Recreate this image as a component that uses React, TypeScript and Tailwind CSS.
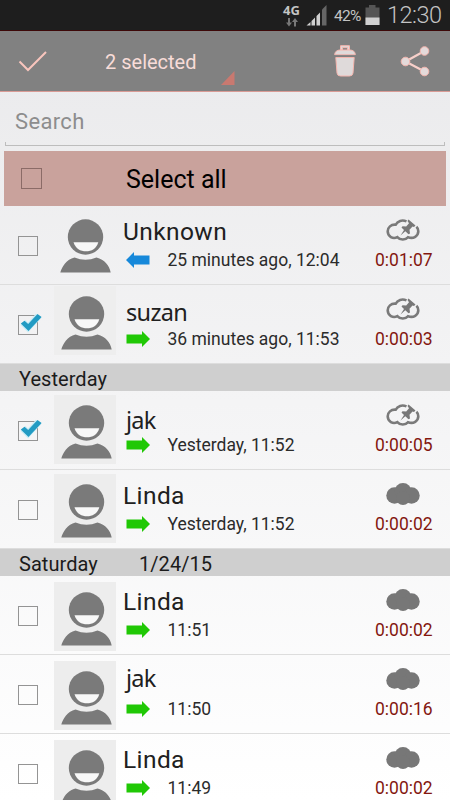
type Call = {
  name: string;
  time: string;
  duration: string;
  checked?: boolean;
  incoming?: boolean;
  pinned?: boolean;
  nameClass: string;
  avatarClass: string;
};

const robotoName = "font-['Roboto',sans-serif] pl-[7px] pt-3 text-[24.500px] tracking-[0.4px]";
const notoName = "font-['Noto_Sans',sans-serif] pl-2.5 text-[23.500px] tracking-[-0.7px]";
const framed = 'bg-[#ededed]';

const recent: Call[] = [
  { name: 'Unknown', time: '25 minutes ago, 12:04', duration: '0:01:07', incoming: true, pinned: true, nameClass: robotoName, avatarClass: '-ml-px mr-px mt-[3px]' },
  { name: 'suzan', time: '36 minutes ago, 11:53', duration: '0:00:03', checked: true, pinned: true, nameClass: `${notoName} pt-[13px]`, avatarClass: 'mt-px bg-[#eeeeee]' },
];

const yesterday: Call[] = [
  { name: 'jak', time: 'Yesterday, 11:52', duration: '0:00:05', checked: true, pinned: true, nameClass: `${notoName} pt-[15px]`, avatarClass: `${framed} mt-1` },
  { name: 'Linda', time: 'Yesterday, 11:52', duration: '0:00:02', nameClass: robotoName, avatarClass: `${framed} mt-1` },
];

const saturday: Call[] = [
  { name: 'Linda', time: '11:51', duration: '0:00:02', nameClass: robotoName, avatarClass: `${framed} mt-1.5` },
  { name: 'jak', time: '11:50', duration: '0:00:16', nameClass: `${notoName} pt-[9px]`, avatarClass: `${framed} mt-1.5` },
  { name: 'Linda', time: '11:49', duration: '0:00:02', nameClass: robotoName, avatarClass: `${framed} mt-1.5` },
];

function Avatar({ className }: { className: string }) {
  return (
    <svg className={`h-[69px] w-[62px] shrink-0 ${className}`} viewBox="0 0 62 69">
      <g fill="#7a7a7a">
        <circle cx="32.500" cy="28" r="17.700" />
        <path d="M7.300 63.500C9 57.500 13.500 50.500 21.500 48.500Q32.500 53 43.500 48.500C51.500 50.500 56.500 56.500 57.700 63.500Z" />
      </g>
      <path d="M20.500 33.200H45.300C43.500 39.500 38.500 42.300 33 42.300S22.500 39.500 20.500 33.200Z" fill="#f8f8f8" />
    </svg>
  );
}

function Arrow({ incoming }: { incoming?: boolean }) {
  return (
    <svg className={`h-4 w-6 shrink-0 ${incoming ? 'text-[#1688da]' : 'text-[#20c805]'}`} viewBox="0 0 24 16" fill="currentColor">
      {incoming ? <path d="M0 8 8 0V3.500H23.500V12.500H8V16Z" /> : <path d="M24 8 16 0V3.500H0.500V12.500H16V16Z" />}
    </svg>
  );
}

function Cloud({ pinned }: { pinned?: boolean }) {
  if (!pinned) {
    return (
      <svg className="h-[22px] w-[34px]" viewBox="0 0 34 22" fill="#777">
        <circle cx="8.500" cy="12.500" r="8.200" />
        <circle cx="17" cy="8.500" r="8.500" />
        <circle cx="25.500" cy="12.500" r="8.200" />
        <circle cx="17" cy="15" r="7" />
      </svg>
    );
  }
  return (
    <svg className="h-[22px] w-[34px]" viewBox="0 0 34 22">
      <path
        d="M20.500 2.400C16 0.500 11.500 2 9.700 5.700C5 5.200 1.700 8.500 1.700 12.300C1.700 17.500 7 20.500 11.300 18.100C14 21.200 19.500 21.300 22 18.200C27.500 20.300 32.300 17 32.300 12.300C32.300 10.500 31.500 8.700 30.400 7.700"
        fill="none"
        stroke="#7a7a7a"
        strokeWidth="2.600"
      />
      <path d="M22.500 0.500 29.500 6.500 28 8 26.500 7.500 23.500 10.800 24 14.500 22.500 15.200 19.300 12.300 14.500 16.500 18 11 15.500 8.500 16.500 7.200 20.200 7.500 23 4.300 21.500 2Z" fill="#777" />
    </svg>
  );
}

function Checkbox({ checked }: { checked?: boolean }) {
  return (
    <svg className="h-[26px] w-[28px] shrink-0" viewBox="0 0 28 26">
      <rect x="2.500" y="5.500" width="19" height="19" fill="none" stroke="#949494" />
      {checked && (
        <>
          <path d="M7 12.500 12 17.500 22.500 6" fill="none" stroke="#c9edf6" strokeWidth="7" />
          <path d="M4.800 13.500 8.500 10.800 12.200 14 21.500 4 25.600 7 12.500 21Z" fill="#229bc3" />
        </>
      )}
    </svg>
  );
}

function CallRow({ call }: { call: Call }) {
  return (
    <div className="flex h-[79px] shrink-0 border-b border-[#dddddd]">
      <div className="w-[54px] shrink-0 pl-4 pt-[25px]">
        <Checkbox checked={call.checked} />
      </div>
      <Avatar className={call.avatarClass} />
      <div className="min-w-0 flex-1">
        <div className={`h-[46px] whitespace-nowrap leading-[28px] text-[#202020] ${call.nameClass}`}>{call.name}</div>
        <div className="flex items-center pl-[9.500px]">
          <Arrow incoming={call.incoming} />
          <span className="ml-[18px] whitespace-nowrap text-[17.500px] leading-4 text-[#2b2b2b]">{call.time}</span>
        </div>
      </div>
      <div className="flex w-[76px] shrink-0 flex-col pr-4 pt-[13px]">
        <div className="pl-3">
          <Cloud pinned={call.pinned} />
        </div>
        <span className="ml-px mt-[11px] text-[17.500px] leading-4 text-[#84170f]">{call.duration}</span>
      </div>
    </div>
  );
}

function SectionHeader({ day, date }: { day: string; date?: string }) {
  return (
    <div className="flex h-[27px] shrink-0 bg-[#cfcfcf] pl-[19px] pt-0.5 text-[20px] leading-[27px] tracking-[0.050px] text-[#1b1b1b]">
      <span className="w-[120px]">{day}</span>
      <span>{date}</span>
    </div>
  );
}

function StatusBar() {
  return (
    <div className="flex h-[30px] shrink-0 justify-end bg-[#1e1e1e] pr-1 text-[#c4c4c4]">
      <div className="w-[23px] pt-0.5">
        <div className="font-['Open_Sans',sans-serif] text-[13px] font-bold leading-4">4G</div>
        <svg className="ml-[3px] h-[9px] w-3" viewBox="0 0 12 9" fill="#777">
          <path d="M2 0H4V4.500H6L3 8.500 0 4.500H2ZM8 8.500H10V4H12L9 0 6 4H8Z" />
        </svg>
      </div>
      <svg className="mt-[5px] h-[21px] w-[22px]" viewBox="0 0 22 21" fill="#cfcfcf">
        <path d="M0.500 20.500 4.500 17V20.500ZM5.500 16 9 12.500V20.500H5.500ZM10.500 11 14 7.500V20.500H10.500Z" />
        <path d="M16 4.500 20.500 0V20.500H16Z" fill="#666" />
      </svg>
      <span className="ml-1.5 w-[31px] whitespace-nowrap pt-[3px] text-[15.500px] leading-[26px] tracking-[-0.7px]">42%</span>
      <svg className="mt-[5px] h-5 w-[15px]" viewBox="0 0 15 20">
        <path d="M4 0H10.500V2.500H14.500V20H0.500V2.500H4Z" fill="#555" />
        <path d="M0.500 12.500H14.500V20H0.500Z" fill="#d0d0d0" />
      </svg>
      <span className="ml-[7px] w-[59px] whitespace-nowrap text-[23.500px] font-light leading-[31px] tracking-[-0.5px]">12:30</span>
    </div>
  );
}

function ActionBar() {
  return (
    <div className="flex h-[62px] shrink-0 items-center border-b border-t border-b-[#d99b95] border-t-[#3d0808] bg-[#818181] text-[#f8dcd8]">
      <svg className="ml-[18px] h-6 w-[30px]" viewBox="0 0 30 24" fill="none" stroke="#f9c5bd" strokeWidth="2">
        <path d="M1.500 12.500 10 21 28 3" />
      </svg>
      <div className="ml-[57px] w-[130px] pt-0.5 text-[20px]">2 selected</div>
      <svg className="-ml-[14px] mt-[33px] h-[14px] w-[14px]" viewBox="0 0 14 14">
        <path d="M0 14H13.500V0Z" fill="#c97970" />
      </svg>
      <svg className="ml-[99px] h-8 w-[22px]" viewBox="0 0 22 32" fill="#dfdada" stroke="#f5b5ae" strokeWidth="1">
        <path d="M6.500 5V0.700H15.500V5H13.500V2.700H8.500V5Z" />
        <path d="M0.700 9.800C0.700 6.800 3 5 6 5H16C19 5 21.300 6.800 21.300 9.800Z" />
        <path d="M1.800 12.500H20.200L19 28Q18.700 31 15.500 31H6.500Q3.300 31 3 28Z" />
        <path d="M0 11.100H22" stroke="#818181" strokeWidth="1.600" />
      </svg>
      <svg className="ml-11 h-8 w-[30px]" viewBox="0 0 30 32">
        <path d="M24.500 6 5.500 16.500 24.500 26.500" fill="none" stroke="#f8d0ca" strokeWidth="2.200" />
        <g fill="#e4dada" stroke="#f5b5ae">
          <circle cx="5.500" cy="16.500" r="4.300" />
          <circle cx="24.500" cy="6" r="4.300" />
          <circle cx="24.500" cy="26.500" r="4.300" />
        </g>
      </svg>
    </div>
  );
}

export default function App() {
  return (
    <div className="flex h-[800px] w-[450px] flex-col overflow-hidden bg-linear-to-b from-[#e9e9eb] to-white font-['Roboto',sans-serif]">
      <StatusBar />
      <ActionBar />

      {/* Search field with the bracket-shaped underline */}
      <div className="h-[60px] shrink-0 px-[5px]">
        <div className="flex h-[50px] items-center pl-2.5 pt-2 text-[22px] tracking-[0.35px] text-[#8d8d8d]">Search</div>
        <div className="h-1 border-x border-b border-[#bdbdbd]" />
      </div>

      <div className="mx-1 -mt-px flex h-[55px] shrink-0 items-center bg-[#c9a29c]">
        <span className="ml-[17px] h-[21px] w-[21px] border border-[#8b6b67]" />
        <span className="ml-[84px] pt-0.5 text-[25px] text-black">Select all</span>
      </div>

      {recent.map((call) => <CallRow key={call.time} call={call} />)}
      <SectionHeader day="Yesterday" />
      {yesterday.map((call) => <CallRow key={call.name} call={call} />)}
      <SectionHeader day="Saturday" date="1/24/15" />
      {saturday.map((call) => <CallRow key={call.time} call={call} />)}
    </div>
  );
}
